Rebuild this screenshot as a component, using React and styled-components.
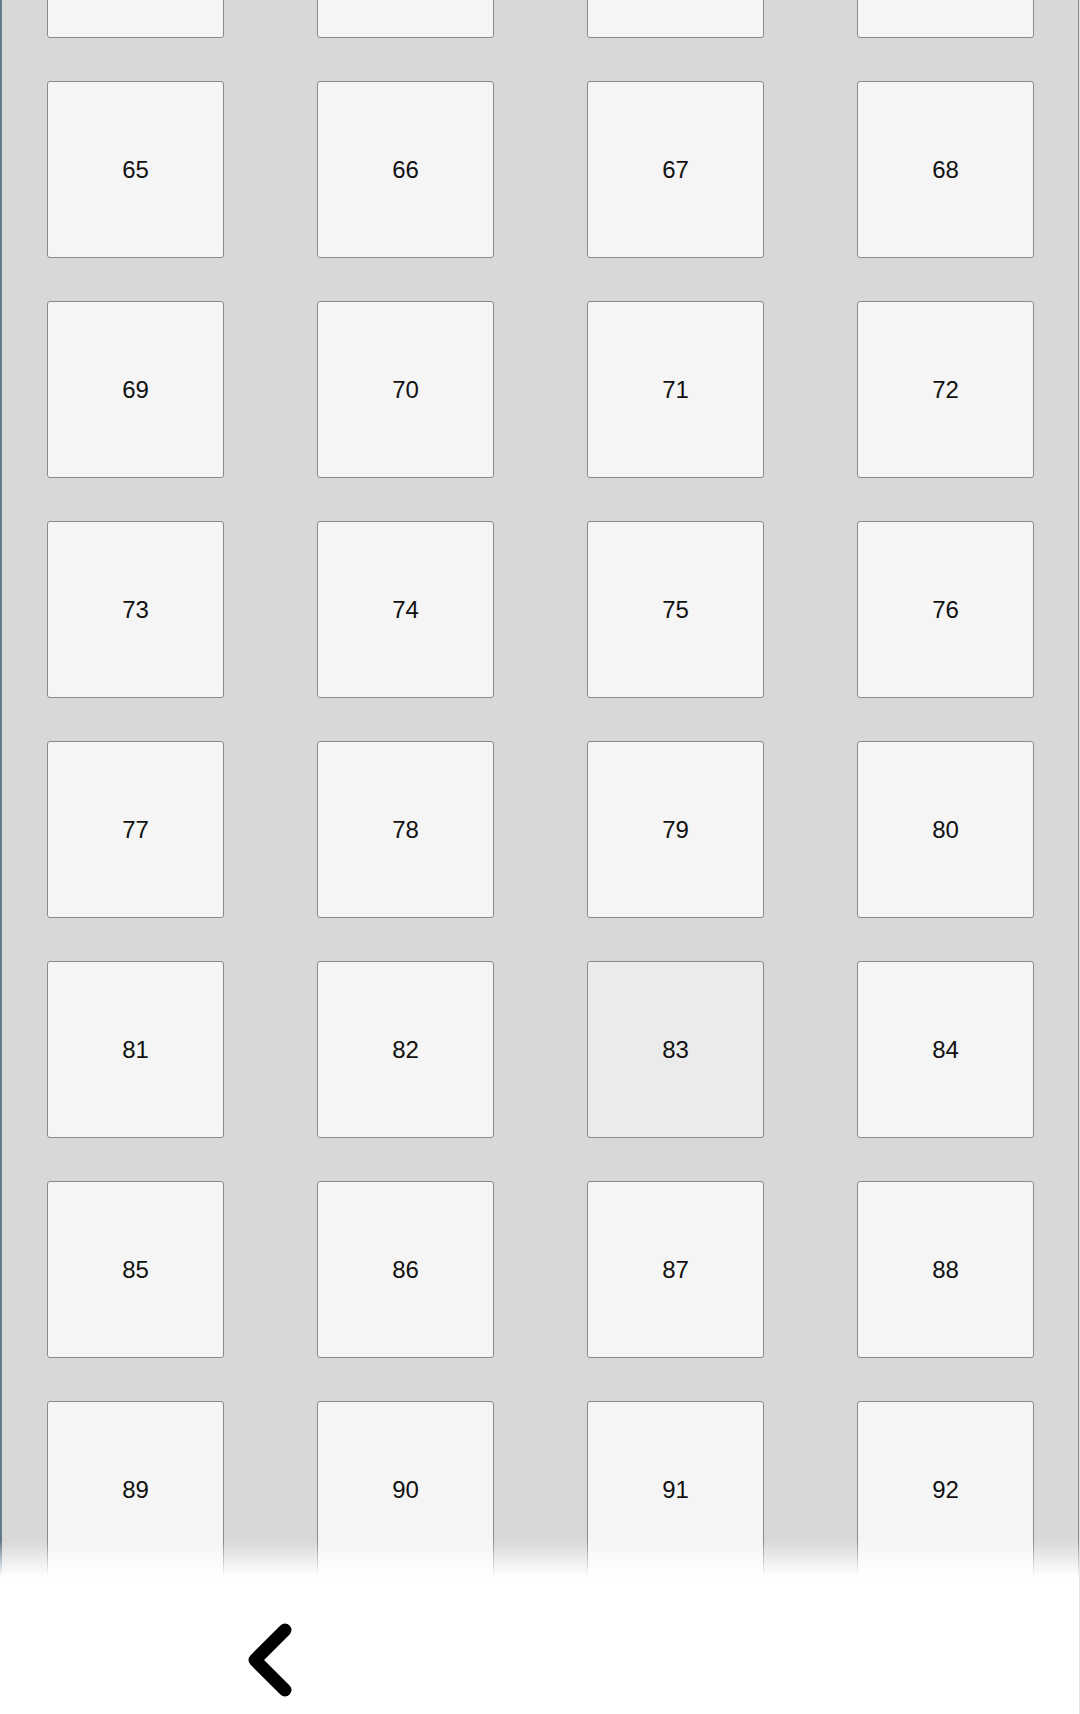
import React, { useLayoutEffect, useRef } from "react";
import styled, { createGlobalStyle } from "styled-components";

const GlobalStyle = createGlobalStyle`
  html, body {
    margin: 0;
    padding: 0;
    height: 100%;
    overflow: hidden;
    background: #e2e4e6;
    font-family: "Liberation Sans", Arial, sans-serif;
  }
  #root { height: 100%; }
`;

const Page = styled.div`
  position: relative;
  height: 100vh;
  width: 1079px;
  box-sizing: border-box;
  border-left: 2px solid #62798a;
  border-right: 1px solid #8c8c8c;
  background: #d8d8d8;
`;

const Scroller = styled.div`
  height: 100%;
  overflow-y: auto;
  scrollbar-width: none;
  &::-webkit-scrollbar { display: none; }
`;

const Grid = styled.div`
  display: grid;
  grid-template-columns: repeat(4, 177px);
  grid-auto-rows: 177px;
  column-gap: 93px;
  row-gap: 43px;
  padding: 21px 0 200px 45px;
`;

const Tile = styled.button`
  display: flex;
  align-items: center;
  justify-content: center;
  box-sizing: border-box;
  width: 177px;
  height: 177px;
  margin: 0;
  padding: 0;
  border: 1px solid #8a8a8a;
  border-radius: 3px;
  background: ${(p) => (p.$active ? "#ebebeb" : "#f5f5f5")};
  color: #111;
  font-family: "Liberation Sans", Arial, sans-serif;
  font-size: 24px;
  cursor: pointer;
`;

const Footer = styled.div`
  position: absolute;
  left: -2px;
  right: -1px;
  bottom: 0;
  height: 134px;
  box-sizing: border-box;
  padding-top: 26px;
  background: #ffffff;
  display: grid;
  grid-template-columns: 1fr 1fr;
  align-items: start;
  &::before {
    content: "";
    position: absolute;
    left: 0;
    right: 0;
    top: -40px;
    height: 40px;
    background: linear-gradient(to bottom, rgba(255, 255, 255, 0), #ffffff 92%);
  }
`;

const NavButton = styled.button`
  justify-self: center;
  width: 60px;
  height: 108px;
  display: flex;
  align-items: center;
  justify-content: center;
  border: none;
  background: transparent;
  padding: 0;
  cursor: pointer;
  visibility: ${(p) => (p.$hidden ? "hidden" : "visible")};
`;

const Chevron = ({ dir }) => (
  <svg width="60" height="90" viewBox="0 0 60 90" aria-hidden="true">
    <polyline
      points={dir === "left" ? "45,15 15,45 45,75" : "15,15 45,45 15,75"}
      fill="none"
      stroke="#000"
      strokeWidth="13"
      strokeLinecap="round"
      strokeLinejoin="round"
    />
  </svg>
);

export default function App() {
  const ref = useRef(null);
  useLayoutEffect(() => {
    if (ref.current) ref.current.scrollTop = 160;
  }, []);
  const items = Array.from({ length: 40 }, (_, i) => i + 61);
  return (
    <>
      <GlobalStyle />
      <Page>
        <Scroller ref={ref}>
          <Grid>
            {items.map((n) => (
              <Tile key={n} $active={n === 83}>
                {n}
              </Tile>
            ))}
          </Grid>
        </Scroller>
        <Footer>
          <NavButton aria-label="Previous">
            <Chevron dir="left" />
          </NavButton>
          <NavButton aria-label="Next" $hidden>
            <Chevron dir="right" />
          </NavButton>
        </Footer>
      </Page>
    </>
  );
}
